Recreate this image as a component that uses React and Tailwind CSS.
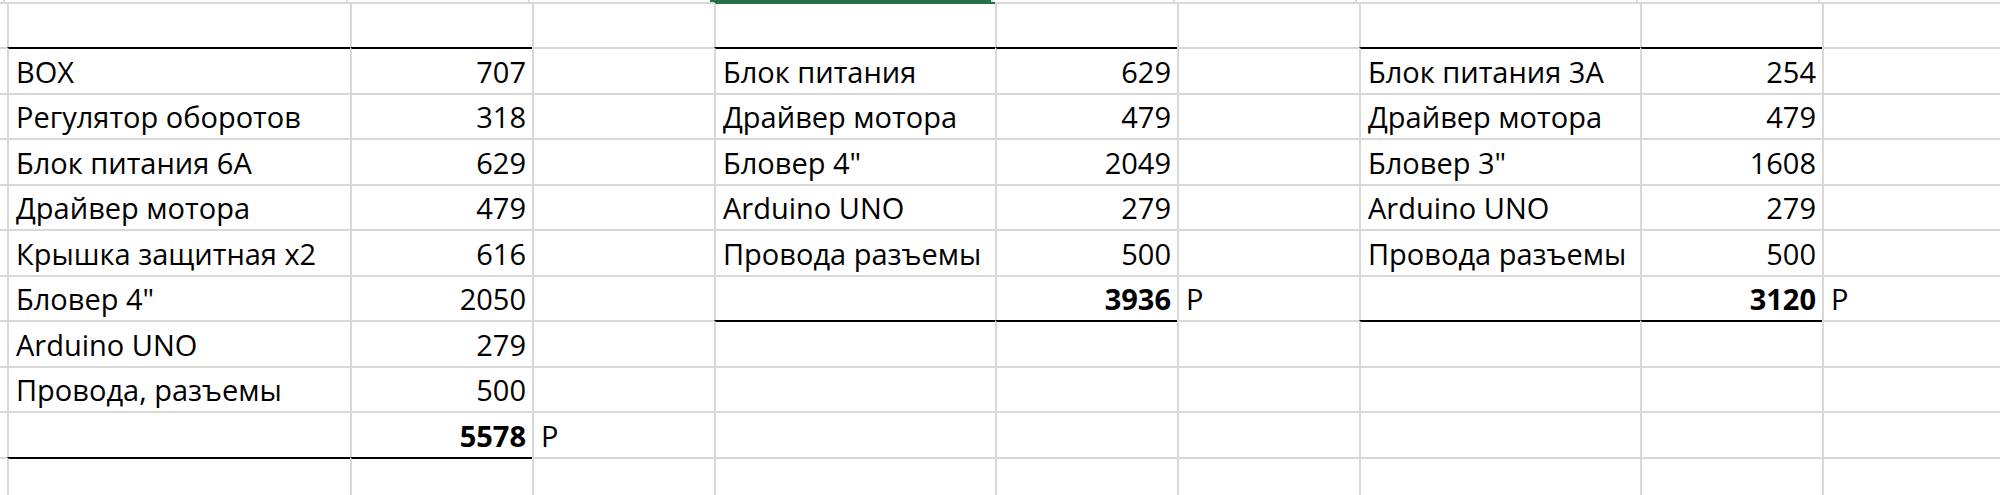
const colW = [
  "w-[3px]",
  "w-[343px]",
  "w-[182px]",
  "w-[182px]",
  "w-[281px]",
  "w-[182px]",
  "w-[182px]",
  "w-[281px]",
  "w-[182px]",
  "flex-1",
];

const rowH = [
  "h-[45px]", "h-[46px]", "h-[45px]", "h-[46px]", "h-[45px]", "h-[46px]",
  "h-[45px]", "h-[46px]", "h-[45px]", "h-[46px]", "h-[45px]",
];

const sec1 = [
  ["BOX", "707"],
  ["Регулятор оборотов", "318"],
  ["Блок питания 6А", "629"],
  ["Драйвер мотора", "479"],
  ["Крышка защитная x2", "616"],
  ["Бловер 4\"", "2050"],
  ["Arduino UNO", "279"],
  ["Провода, разъемы", "500"],
];

const sec2 = [
  ["Блок питания", "629"],
  ["Драйвер мотора", "479"],
  ["Бловер 4\"", "2049"],
  ["Arduino UNO", "279"],
  ["Провода разъемы", "500"],
];

const sec3 = [
  ["Блок питания 3А", "254"],
  ["Драйвер мотора", "479"],
  ["Бловер 3\"", "1608"],
  ["Arduino UNO", "279"],
  ["Провода разъемы", "500"],
];

function buildGrid() {
  const grid = Array.from({ length: 11 }, () =>
    Array.from({ length: 10 }, () => ({ text: "", num: false, bold: false, top: "gray" }))
  );
  const place = (items, c, total, totalRow) => {
    items.forEach(([name, price], i) => {
      grid[i + 1][c].text = name;
      grid[i + 1][c + 1] = { ...grid[i + 1][c + 1], text: price, num: true };
    });
    grid[totalRow][c + 1] = { ...grid[totalRow][c + 1], text: total, num: true, bold: true };
    grid[totalRow][c + 2].text = "Р";
    [1, totalRow + 1].forEach((r) => {
      grid[r][c].top = "black";
      grid[r][c + 1].top = "black";
    });
  };
  place(sec1, 1, "5578", 9);
  place(sec2, 4, "3936", 6);
  place(sec3, 7, "3120", 6);
  grid[0][4].top = "green";
  return grid;
}

function Cell({ cell, c, h }) {
  const topCls =
    cell.top === "black"
      ? "border-t-black"
      : cell.top === "green"
      ? "border-t-[#217346]"
      : "border-t-[#d9d9d9]";
  return (
    <div
      className={`${colW[c]} ${h} shrink-0 flex items-end border-t-2 ${topCls} ${
        c === 0 ? "" : "border-l-2 border-l-[#d9d9d9]"
      } ${cell.num ? "justify-end pr-[6px]" : "justify-start pl-[7px]"} pb-[7px]`}
    >
      <span className={`leading-none whitespace-nowrap ${cell.bold ? "font-bold" : ""}`}>
        {cell.text}
      </span>
    </div>
  );
}

export default function App() {
  const grid = buildGrid();

  return (
    <div className="w-[2000px] h-[495px] overflow-hidden bg-white text-black font-['Open_Sans',sans-serif] text-[29px]">
      <div className="flex h-[2px]">
        {colW.map((w, c) => (
          <div
            key={c}
            className={`${w} shrink-0 ${c === 4 ? "bg-[#217346]" : ""} ${
              c === 0 ? "" : c === 4 ? "border-l-2 border-l-[#217346]" : "border-l-2 border-l-[#d9d9d9]"
            }`}
          />
        ))}
      </div>
      {grid.map((row, r) => (
        <div key={r} className="flex">
          {row.map((cell, c) => (
            <Cell key={c} cell={cell} c={c} h={rowH[r]} />
          ))}
        </div>
      ))}
    </div>
  );
}
